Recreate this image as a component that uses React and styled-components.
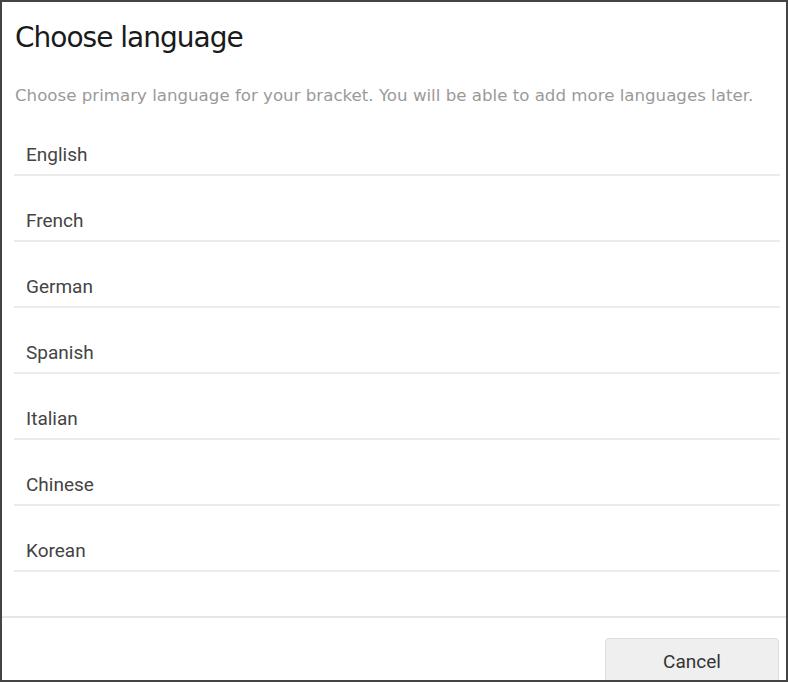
import React from 'react';
import styled, { createGlobalStyle } from 'styled-components';

const GlobalStyle = createGlobalStyle`
    html, body {
        margin: 0;
        padding: 0;
        background: #ffffff;
    }
    * {
        box-sizing: border-box;
    }
`;

const Dialog = styled.div`
    width: 788px;
    height: 682px;
    border: 2px solid #444444;
    background: #ffffff;
    display: flex;
    flex-direction: column;
    overflow: hidden;
`;

const Header = styled.div`
    padding: 16px 12px 0 13px;
`;

const Title = styled.h1`
    margin: 0;
    font-family: "DejaVu Sans", sans-serif;
    font-weight: 400;
    font-size: 28px;
    line-height: 40px;
    color: #1a1a1a;
    letter-spacing: -1px;
`;

const Subtitle = styled.p`
    margin: 27px 0 0;
    font-family: "DejaVu Sans", sans-serif;
    font-size: 16.65px;
    line-height: 22px;
    color: #9a9a9a;
    white-space: nowrap;
`;

const List = styled.ul`
    list-style: none;
    margin: 3px 6px 0 12px;
    padding: 0;
    flex: 1;
`;

const Row = styled.li`
    height: 66px;
    display: flex;
    align-items: flex-end;
    padding: 0 0 8px 12px;
    border-bottom: 2px solid #ebebeb;
    font-family: Roboto, "Liberation Sans", sans-serif;
    font-size: 19px;
    line-height: 22px;
    color: #444444;
`;

const Footer = styled.div`
    border-top: 2px solid #e6e6e6;
    height: 64px;
    display: flex;
    justify-content: flex-end;
    align-items: flex-start;
    padding: 20px 7px 0 0;
`;

const Button = styled.button`
    width: 174px;
    height: 48px;
    border: 1px solid #dedede;
    border-radius: 4px;
    background: #efefef;
    font-family: Roboto, "Liberation Sans", sans-serif;
    font-size: 19px;
    color: #333333;
    padding: 0 0 2px;
`;

const languages = ['English', 'French', 'German', 'Spanish', 'Italian', 'Chinese', 'Korean'];

export default function App() {
    return (
        <>
            <GlobalStyle />
            <Dialog>
                <Header>
                    <Title>Choose language</Title>
                    <Subtitle>
                        Choose primary language for your bracket. You will be able to add more languages later.
                    </Subtitle>
                </Header>
                <List>
                    {languages.map((lang) => (
                        <Row key={lang}>{lang}</Row>
                    ))}
                </List>
                <Footer>
                    <Button>Cancel</Button>
                </Footer>
            </Dialog>
        </>
    );
}
